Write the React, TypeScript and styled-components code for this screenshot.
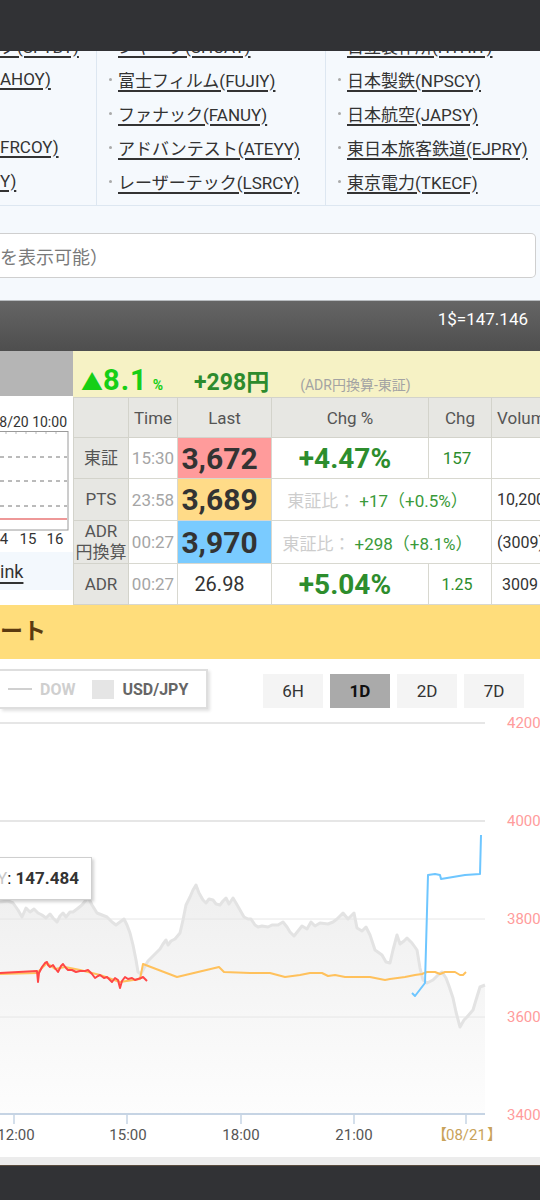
import styled, { createGlobalStyle } from "styled-components";

const FONT = `Roboto, "Noto Sans CJK JP", sans-serif`;

const GlobalStyle = createGlobalStyle`
  html, body {
    margin: 0;
    padding: 0;
    background: #ffffff;
  }
  body {
    font-family: ${FONT};
    width: 540px;
    overflow: hidden;
  }
`;

const StatusBar = styled.div`
  position: fixed;
  top: 0;
  left: 0;
  right: 0;
  height: 51px;
  background: #313235;
  z-index: 10;
`;

const Page = styled.div`
  width: 540px;
  overflow: hidden;
`;

/* ---------- link list ---------- */

const LinkGrid = styled.div`
  display: grid;
  grid-template-columns: 97px 229px 1fr;
  background: #f5f9fd;
  border-bottom: 1px solid #dde7f1;
`;

const LinkColumn = styled.div<{ $last?: boolean }>`
  padding: 28px 0 7px 12px;
  border-right: ${(p) => (p.$last ? "none" : "1px solid #dde7f1")};
  &:first-child {
    padding-left: 0;
  }
`;

const LinkRow = styled.div`
  height: 34px;
  display: flex;
  align-items: center;
  white-space: nowrap;
`;

const Bullet = styled.span`
  width: 3px;
  height: 3px;
  border-radius: 50%;
  background: #aaa;
  margin-right: 6px;
  flex: none;
`;

const StockLink = styled.a`
  font-size: 17px;
  color: #333;
  text-decoration: underline;
  text-decoration-thickness: 1.5px;
  text-underline-offset: 3px;
`;

/* ---------- search box ---------- */

const SearchArea = styled.div`
  background: #f5f9fd;
  padding: 27px 4px 22px 0;
`;

const SearchBox = styled.div`
  height: 45px;
  box-sizing: border-box;
  background: #fff;
  border: 1.5px solid #cfcfcf;
  border-left: none;
  border-radius: 0 5px 5px 0;
  display: flex;
  align-items: center;
  font-size: 18px;
  color: #7a7a7a;
`;

/* ---------- rate bar ---------- */

const RateBar = styled.div`
  height: 42px;
  border-top: 1px solid #b8bcc0;
  background: linear-gradient(#656565, #4e4e4e);
  color: #fff;
  font-size: 17px;
  line-height: 20px;
  display: flex;
  justify-content: flex-end;
  padding: 8px 12px 0 0;
`;

/* ---------- quote block ---------- */

const QuoteBlock = styled.div`
  display: flex;
  height: 254px;
`;

const SidePanel = styled.div`
  width: 73px;
  flex: none;
  display: flex;
  flex-direction: column;
`;

const GrayCap = styled.div`
  height: 45px;
  background: #b5b5b5;
`;

const SideLinkBox = styled.div`
  height: 38px;
  background: #f3f8fd;
  display: flex;
  align-items: center;
  font-size: 18px;
`;

const SideLink = styled.a`
  color: #333;
  text-decoration: underline;
  text-decoration-thickness: 1.5px;
  text-underline-offset: 4px;
`;

const TablePanel = styled.div`
  flex: 1;
  overflow: hidden;
  display: flex;
  flex-direction: column;
`;

const Summary = styled.div`
  height: 46px;
  box-sizing: border-box;
  background: #f6f2c5;
  display: flex;
  align-items: baseline;
  padding: 12px 0 0 8px;
  white-space: nowrap;
`;

const UpRate = styled.span`
  color: #16cf16;
  font-weight: 700;
  font-size: 29px;
  line-height: 1;
  letter-spacing: 1px;
`;

const UpMark = styled.span`
  font-size: 22px;
  letter-spacing: 0;
`;

const UpUnit = styled.span`
  color: #16cf16;
  font-weight: 700;
  font-size: 14px;
  margin-left: 5px;
`;

const YenDiff = styled.span`
  color: #2d8b2d;
  font-weight: 700;
  font-size: 23px;
  margin-left: 31px;
`;

const DiffNote = styled.span`
  color: #a3a3a3;
  font-size: 14px;
  margin-left: 31px;
`;

const QuoteTable = styled.table`
  border-collapse: collapse;
  table-layout: fixed;
  width: 488px;
  font-family: ${FONT};
  text-align: center;
  white-space: nowrap;
`;

const Row = styled.tr<{ $h: number }>`
  height: ${(p) => p.$h}px;
`;

const HeadCell = styled.th<{ $left?: boolean }>`
  background: #e7e7e3;
  border: 1px solid #d3d3cb;
  color: #555;
  font-size: 17px;
  font-weight: 400;
  padding: 0 0 0 ${(p) => (p.$left ? "5px" : "0")};
  text-align: ${(p) => (p.$left ? "left" : "center")};
  overflow: hidden;
`;

const LabelCell = styled.td`
  background: #e7e7e3;
  border: 1px solid #d3d3cb;
  color: #555;
  font-size: 17px;
  line-height: 21px;
  padding: 0;
`;

const BaseCell = styled.td`
  border: 1px solid #d8d8d0;
  padding: 0;
  overflow: hidden;
`;

const TimeCell = styled(BaseCell)`
  color: #a5a5a5;
  font-size: 17px;
`;

const LastCell = styled(BaseCell)<{ $bg: string; $big?: boolean }>`
  background: ${(p) => p.$bg};
  color: #333;
  font-size: ${(p) => (p.$big ? "30px" : "20px")};
  font-weight: ${(p) => (p.$big ? 700 : 400)};
  padding-right: 10px;
`;

const PctCell = styled(BaseCell)`
  color: #2d8d2d;
  font-size: 28px;
  font-weight: 700;
  padding-right: 10px;
`;

const CompareCell = styled(BaseCell)`
  font-size: 17px;
  color: #3a9a3a;
  padding-right: 8px;
`;

const CompareLabel = styled.span`
  color: #cdcdcd;
  margin-right: 4px;
`;

const ChgCell = styled(BaseCell)<{ $small?: boolean }>`
  color: #2d8d2d;
  font-size: ${(p) => (p.$small ? "16px" : "17px")};
  padding-right: 6px;
`;

const VolCell = styled(BaseCell)<{ $pad?: number }>`
  color: #333;
  font-size: 16px;
  text-align: left;
  padding-left: ${(p) => p.$pad ?? 5}px;
`;

/* ---------- chart ---------- */

const ChartTitle = styled.div`
  height: 54px;
  background: #ffdd7b;
  color: #5b3a10;
  font-size: 23px;
  font-weight: 700;
  line-height: 54px;
  white-space: nowrap;
`;

const ChartSection = styled.div`
  position: relative;
  background: #fff;
  padding-top: 10px;
`;

const Toolbar = styled.div`
  height: 40px;
  display: flex;
  align-items: flex-start;
`;

const Legend = styled.div`
  width: 208px;
  height: 40px;
  box-sizing: border-box;
  border: 2px solid #dedede;
  border-left: none;
  box-shadow: 2px 2px 3px rgba(0, 0, 0, 0.12);
  display: flex;
  align-items: center;
  padding-left: 8px;
  font-size: 16px;
  font-weight: 700;
`;

const LegendLine = styled.span`
  width: 24px;
  height: 2px;
  background: #d0d0d0;
  margin-right: 8px;
`;

const LegendText = styled.span<{ $muted?: boolean }>`
  color: ${(p) => (p.$muted ? "#cfcfcf" : "#666")};
  margin-right: ${(p) => (p.$muted ? "17px" : "0")};
`;

const LegendSwatch = styled.span`
  width: 22px;
  height: 19px;
  background: #e5e5e5;
  margin-right: 8px;
`;

const RangeGroup = styled.div`
  margin-left: auto;
  margin-top: 5px;
  padding-right: 16px;
  display: flex;
  gap: 7px;
`;

const RangeButton = styled.div<{ $active?: boolean }>`
  width: 60px;
  height: 34px;
  display: flex;
  align-items: center;
  justify-content: center;
  font-size: 17px;
  background: ${(p) => (p.$active ? "#aaaaaa" : "#f4f4f4")};
  color: ${(p) => (p.$active ? "#111" : "#333")};
  font-weight: ${(p) => (p.$active ? 700 : 400)};
`;

const Tooltip = styled.div`
  position: absolute;
  top: 198px;
  left: -20px;
  width: 112px;
  height: 43px;
  box-sizing: border-box;
  background: #fff;
  border: 1px solid #cfcfcf;
  box-shadow: 2px 2px 3px rgba(0, 0, 0, 0.18);
  padding-left: 16px;
  line-height: 41px;
  font-size: 17px;
  white-space: nowrap;
`;

const TipKey = styled.span`
  color: #c8c8c8;
`;

const TipValue = styled.span`
  color: #333;
  font-weight: 700;
`;

const ChartSvg = styled.svg`
  display: block;
  font-family: ${FONT};
`;

const BottomStrip = styled.div`
  height: 8px;
  background: #ececec;
  border-bottom: 1px solid #5a4c3e;
`;

const NavBar = styled.div`
  height: 34px;
  background: #313235;
`;

/* ---------- data ---------- */

const linkColumns: string[][] = [
  ["ク(SFTBY)", "AHOY)", "", "FRCOY)", "Y)"],
  [
    "シャープ(SHCAY)",
    "富士フィルム(FUJIY)",
    "ファナック(FANUY)",
    "アドバンテスト(ATEYY)",
    "レーザーテック(LSRCY)",
  ],
  [
    "日立製作所(HTHIY)",
    "日本製鉄(NPSCY)",
    "日本航空(JAPSY)",
    "東日本旅客鉄道(EJPRY)",
    "東京電力(TKECF)",
  ],
];

const usdPoints: [number, number][] = [
  [0, 902], [8, 901], [13, 903], [18, 910], [22, 917], [26, 908], [30, 912],
  [34, 909], [38, 913], [42, 915], [46, 918], [50, 914], [53, 918], [57, 922],
  [60, 916], [63, 913], [66, 917], [70, 912], [73, 912], [77, 909], [82, 905],
  [86, 900], [88, 897], [92, 905], [97, 913], [102, 915], [107, 917], [112, 922],
  [116, 925], [120, 922], [124, 919], [127, 925], [130, 933], [133, 945],
  [136, 960], [138, 972], [141, 974], [144, 968], [148, 961], [153, 956],
  [157, 952], [160, 949], [163, 944], [166, 940], [168, 945], [171, 941],
  [175, 939], [180, 933], [183, 920], [186, 905], [190, 897], [193, 890],
  [196, 885], [199, 893], [203, 900], [206, 903], [209, 899], [213, 900],
  [216, 904], [220, 905], [223, 901], [226, 898], [229, 904], [233, 898],
  [236, 903], [240, 910], [244, 917], [248, 919], [251, 919], [255, 925],
  [258, 927], [262, 926], [268, 927], [272, 925], [278, 925], [283, 922],
  [287, 927], [290, 932], [294, 936], [298, 931], [302, 926], [307, 929],
  [311, 922], [315, 926], [320, 923], [328, 924], [333, 922], [337, 919],
  [343, 913], [348, 919], [351, 916], [354, 913], [357, 928], [362, 931],
  [366, 927], [370, 935], [375, 950], [382, 955], [386, 962], [390, 963],
  [393, 950], [397, 935], [400, 944], [404, 941], [407, 938], [412, 943],
  [417, 950], [420, 968], [423, 980], [427, 983], [433, 980], [438, 975],
  [442, 972], [446, 978], [449, 986], [453, 998], [456, 1012], [460, 1027],
  [464, 1020], [467, 1017], [473, 1010], [476, 1000], [480, 987], [485, 985],
];

const ptsPoints = [
  [0, 974], [37, 973], [42, 968], [47, 963], [55, 969], [65, 967], [80, 970],
  [100, 975], [120, 982], [140, 979], [143, 964], [177, 977], [219, 967],
  [224, 972], [250, 973], [270, 973], [285, 977], [300, 975], [310, 973],
  [322, 973], [328, 976], [335, 975], [345, 977], [370, 977], [385, 980],
  [390, 979], [405, 977], [415, 975], [422, 974], [427, 972], [435, 972],
  [440, 974], [445, 972], [455, 972], [460, 975], [463, 975], [466, 972],
];

const tseEPoints = [
  [0, 973], [37, 971], [38, 982], [39, 973], [42, 967], [45, 963], [47, 962],
  [48, 965], [50, 967], [53, 965], [55, 968], [58, 972], [61, 966], [63, 964],
  [66, 968], [68, 970], [72, 970], [76, 972], [80, 971], [85, 971], [88, 970],
  [92, 974], [95, 978], [98, 976], [100, 975], [104, 978], [107, 977],
  [110, 980], [112, 982], [115, 978], [118, 980], [120, 988], [122, 981],
  [125, 977], [128, 979], [132, 978], [135, 980], [138, 979], [141, 978],
  [143, 977], [145, 979], [147, 981],
];

const adrPoints = [
  [412, 993], [415, 996], [425, 983], [428, 875], [435, 874], [440, 875],
  [441, 879], [465, 875], [480, 874], [481, 835],
];

const toPoints = (pts: number[][]) => pts.map((p) => p.join(",")).join(" ");

const usdArea =
  "M" +
  usdPoints.map((p) => p.join(",")).join(" L") +
  " L485,1114 L0,1114 Z";

const gridY = [723, 821, 919, 1017];
const priceLabels = ["4200", "4000", "3800", "3600", "3400"];
const ticks = [
  { x: 14, label: "12:00", cx: 16 },
  { x: 127, label: "15:00", cx: 128 },
  { x: 241, label: "18:00", cx: 241 },
  { x: 354, label: "21:00", cx: 354 },
  { x: 466, label: "", cx: 466 },
];

function MiniChart() {
  return (
    <svg width={73} height={156} viewBox="0 396 73 156" style={{ display: "block" }}>
      <text x={67} y={427} fontSize={14} fill="#333" textAnchor="end" fontFamily={FONT}>
        8/20 10:00
      </text>
      <rect x={-2} y={431.5} width={70} height={98.5} fill="#fff" stroke="#9a9a9a" strokeWidth={1} />
      {[6, 16, 26, 36, 46, 56].map((x) => (
        <line key={x} x1={x} x2={x} y1={432} y2={434} stroke="#bbb" strokeWidth={1} />
      ))}
      {[457, 481, 506].map((y) => (
        <line key={y} x1={0} x2={67} y1={y} y2={y} stroke="#777" strokeWidth={1} strokeDasharray="4 4" />
      ))}
      <line x1={0} x2={67} y1={519} y2={519} stroke="#d33" strokeWidth={1.2} />
      <g fontSize={15} fill="#333" fontFamily={FONT} textAnchor="middle">
        <text x={4} y={544}>4</text>
        <text x={28} y={544}>15</text>
        <text x={55} y={544}>16</text>
      </g>
    </svg>
  );
}

function PriceChart() {
  return (
    <ChartSvg width={540} height={448} viewBox="0 709 540 448">
      <defs>
        <linearGradient id="usdFill" gradientUnits="userSpaceOnUse" x1="0" y1="885" x2="0" y2="1114">
          <stop offset="0" stopColor="#efefef" />
          <stop offset="1" stopColor="#fdfdfd" />
        </linearGradient>
      </defs>
      <path d={usdArea} fill="url(#usdFill)" />
      {gridY.map((y, i) => (
        <line key={y} x1={0} x2={485} y1={y} y2={y} stroke="#e6e6e6" strokeWidth={i < 2 ? 2 : 1} />
      ))}
      <polyline points={toPoints(usdPoints)} fill="none" stroke="#e3e3e3" strokeWidth={3} strokeLinejoin="round" />
      <polyline points={toPoints(ptsPoints)} fill="none" stroke="#ffc15c" strokeWidth={2} strokeLinejoin="round" />
      <polyline points={toPoints(tseEPoints)} fill="none" stroke="#ff4646" strokeWidth={2} strokeLinejoin="round" />
      <polyline points={toPoints(adrPoints)} fill="none" stroke="#6ec6ff" strokeWidth={2} strokeLinejoin="round" />
      <line x1={0} x2={485} y1={1114} y2={1114} stroke="#c6d4e4" strokeWidth={2} />
      {ticks.map((t) => (
        <line key={t.x} x1={t.x} x2={t.x} y1={1114} y2={1124} stroke="#c6d4e4" strokeWidth={1.5} />
      ))}
      <g fontSize={15} fill="#ff9c9c">
        {priceLabels.map((l, i) => (
          <text key={l} x={507} y={728 + i * 98}>
            {l}
          </text>
        ))}
      </g>
      <g fontSize={15} fill="#555" textAnchor="middle">
        {ticks
          .filter((t) => t.label)
          .map((t) => (
            <text key={t.x} x={t.cx} y={1140}>
              {t.label}
            </text>
          ))}
      </g>
      <g fontSize={15} fill="#c9a35a">
        <text x={432} y={1140}>【</text>
        <text x={446} y={1140}>08/21</text>
        <text x={487} y={1140}>】</text>
      </g>
    </ChartSvg>
  );
}

export default function App() {
  return (
    <>
      <GlobalStyle />
      <StatusBar />
      <Page>
        <LinkGrid>
          {linkColumns.map((col, ci) => (
            <LinkColumn key={ci} $last={ci === 2}>
              {col.map((name, ri) => (
                <LinkRow key={ri}>
                  {ci > 0 && <Bullet />}
                  {name && <StockLink>{name}</StockLink>}
                </LinkRow>
              ))}
            </LinkColumn>
          ))}
        </LinkGrid>

        <SearchArea>
          <SearchBox>を表示可能）</SearchBox>
        </SearchArea>

        <RateBar>1$=147.146</RateBar>

        <QuoteBlock>
          <SidePanel>
            <GrayCap />
            <MiniChart />
            <SideLinkBox>
              <SideLink>ink</SideLink>
            </SideLinkBox>
          </SidePanel>

          <TablePanel>
            <Summary>
              <UpRate>
                <UpMark>▲</UpMark>8.1
              </UpRate>
              <UpUnit>%</UpUnit>
              <YenDiff>+298円</YenDiff>
              <DiffNote>(ADR円換算-東証)</DiffNote>
            </Summary>
            <QuoteTable>
              <colgroup>
                <col style={{ width: 55 }} />
                <col style={{ width: 49 }} />
                <col style={{ width: 94 }} />
                <col style={{ width: 157 }} />
                <col style={{ width: 63 }} />
                <col style={{ width: 70 }} />
              </colgroup>
              <tbody>
                <Row $h={40}>
                  <HeadCell />
                  <HeadCell>Time</HeadCell>
                  <HeadCell>Last</HeadCell>
                  <HeadCell>Chg %</HeadCell>
                  <HeadCell>Chg</HeadCell>
                  <HeadCell $left>Volume</HeadCell>
                </Row>
                <Row $h={41}>
                  <LabelCell>東証</LabelCell>
                  <TimeCell>15:30</TimeCell>
                  <LastCell $bg="#ff9b9b" $big>3,672</LastCell>
                  <PctCell>+4.47%</PctCell>
                  <ChgCell>157</ChgCell>
                  <VolCell />
                </Row>
                <Row $h={42}>
                  <LabelCell>PTS</LabelCell>
                  <TimeCell>23:58</TimeCell>
                  <LastCell $bg="#ffdb88" $big>3,689</LastCell>
                  <CompareCell colSpan={2}>
                    <CompareLabel>東証比：</CompareLabel>+17（+0.5%）
                  </CompareCell>
                  <VolCell>10,200</VolCell>
                </Row>
                <Row $h={43}>
                  <LabelCell>
                    ADR
                    <br />
                    円換算
                  </LabelCell>
                  <TimeCell>00:27</TimeCell>
                  <LastCell $bg="#7acbff" $big>3,970</LastCell>
                  <CompareCell colSpan={2}>
                    <CompareLabel>東証比：</CompareLabel>+298（+8.1%）
                  </CompareCell>
                  <VolCell>(3009)</VolCell>
                </Row>
                <Row $h={41}>
                  <LabelCell>ADR</LabelCell>
                  <TimeCell>00:27</TimeCell>
                  <LastCell $bg="#ffffff">26.98</LastCell>
                  <PctCell>+5.04%</PctCell>
                  <ChgCell $small>1.25</ChgCell>
                  <VolCell $pad={10}>3009</VolCell>
                </Row>
              </tbody>
            </QuoteTable>
          </TablePanel>
        </QuoteBlock>

        <ChartTitle>ート</ChartTitle>

        <ChartSection>
          <Toolbar>
            <Legend>
              <LegendLine />
              <LegendText $muted>DOW</LegendText>
              <LegendSwatch />
              <LegendText>USD/JPY</LegendText>
            </Legend>
            <RangeGroup>
              <RangeButton>6H</RangeButton>
              <RangeButton $active>1D</RangeButton>
              <RangeButton>2D</RangeButton>
              <RangeButton>7D</RangeButton>
            </RangeGroup>
          </Toolbar>
          <PriceChart />
          <Tooltip>
            <TipKey>Y</TipKey>: <TipValue>147.484</TipValue>
          </Tooltip>
        </ChartSection>

        <BottomStrip />
        <NavBar />
      </Page>
    </>
  );
}
